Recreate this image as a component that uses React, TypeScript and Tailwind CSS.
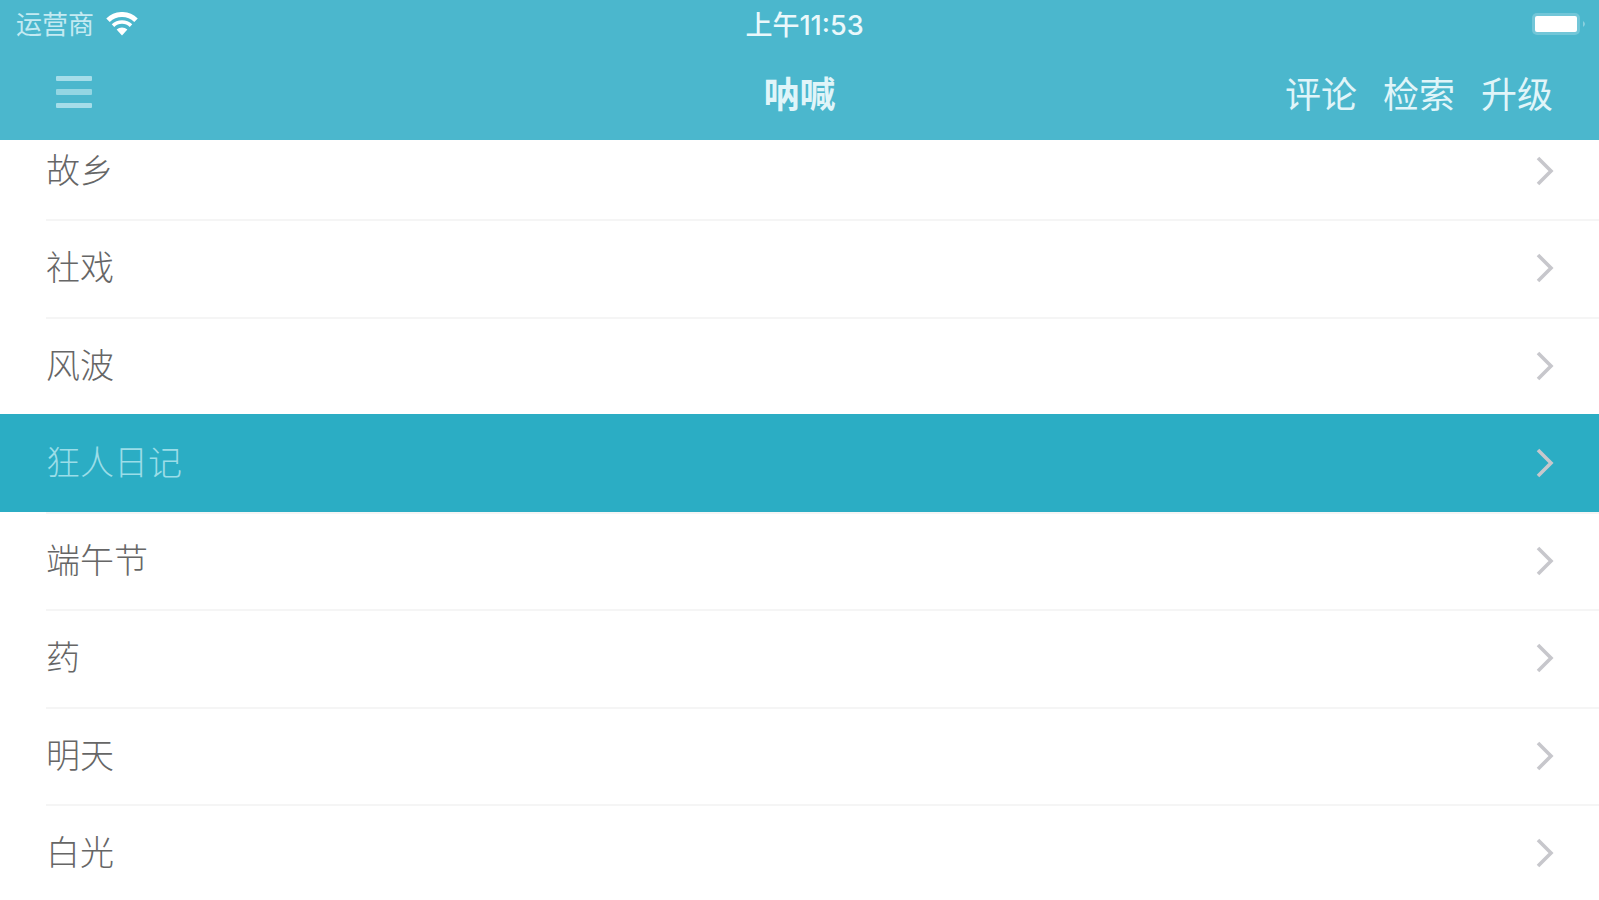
const chapters = ["故乡", "社戏", "风波", "狂人日记", "端午节", "药", "明天", "白光"];
const selectedChapter = "狂人日记";
const actions = ["评论", "检索", "升级"];

const WifiIcon = () => (
    <svg width="32" height="24" viewBox="0 0 32 24" fill="none" aria-hidden="true">
        <path d="M2 8.2a20 20 0 0 1 28 0" stroke="currentColor" strokeWidth="5" />
        <path d="M7 13.6a13 13 0 0 1 18 0" stroke="currentColor" strokeWidth="3.6" />
        <path d="M16 23.5l-5.4-6a8 8 0 0 1 10.8 0z" fill="currentColor" />
    </svg>
);

const BatteryIcon = () => (
    <svg width="56" height="24" viewBox="0 0 56 24" aria-hidden="true">
        <rect x="1" y="1" width="48" height="22" rx="5" fill="#fff" opacity="0.22" />
        <rect x="4" y="4" width="42" height="16" rx="2" fill="#fff" />
        <path d="M52 9q4 3 0 6z" fill="#fff" opacity="0.35" />
    </svg>
);

const MenuIcon = () => (
    <svg width="36" height="34" viewBox="0 0 36 34" fill="#a5dde9" aria-hidden="true">
        <rect y="1" width="36" height="5" rx="1" />
        <rect y="14" width="36" height="6" rx="1" opacity="0.8" />
        <rect y="28" width="36" height="5" rx="1" />
    </svg>
);

const ChevronIcon = () => (
    <svg width="20" height="32" viewBox="0 0 20 32" fill="none" aria-hidden="true">
        <path d="M3 3l13 13L3 29" stroke="#c7c7cc" strokeWidth="3.6" />
    </svg>
);

const StatusBar = () => (
    <div className="grid h-12 grid-cols-[1fr_auto_1fr] items-center pr-3 pl-4 text-[26px] leading-none">
        <div className="flex items-center gap-3 text-[#c4eaf2]">
            <span className="pt-0.5">运营商</span>
            <span className="text-white"><WifiIcon /></span>
        </div>
        <span className="pt-0.5 pl-1.5 text-[27px] font-medium text-[#eaf8fb]">上午11:53</span>
        <div className="flex justify-end">
            <BatteryIcon />
        </div>
    </div>
);

const NavBar = () => (
    <nav className="grid h-[92px] grid-cols-[1fr_auto_1fr] items-center px-[46px] text-4xl leading-none">
        <button type="button" aria-label="菜单" className="justify-self-start pb-1 pl-2.5">
            <MenuIcon />
        </button>
        <h1 className="pt-0.5 font-bold text-[#e0f5f9]">呐喊</h1>
        <div className="flex justify-end gap-[26px] pt-0.5 text-[#e0f5f9]">
            {actions.map((action) => (
                <button key={action} type="button">{action}</button>
            ))}
        </div>
    </nav>
);

const ChapterRow = (props: { title: string, selected: boolean }) => {
    const { title, selected } = props;
    return (
        <li className={`odd:h-[97px] even:h-[98px] ${selected ? "bg-[#2badc4]" : ""}`}>
            <a
                href="#"
                aria-current={selected ? "true" : undefined}
                className={`ml-[46px] flex h-full items-center justify-between border-t-2 pr-11 pb-0.5 ${selected ? "border-transparent text-[#9bdde8]" : "border-[#f5f5f5] text-[#666]"}`}
            >
                <span className="text-[34px] leading-none font-light">{title}</span>
                <ChevronIcon />
            </a>
        </li>
    );
};

const App = () => {
    return (
        <div className="flex h-screen flex-col overflow-hidden bg-white font-['Inter','Noto_Sans_CJK_SC',sans-serif]">
            <header className="relative z-10 shrink-0 bg-[#4bb7cd]">
                <StatusBar />
                <NavBar />
            </header>
            {/* the list is scrolled slightly under the header */}
            <main className="min-h-0 flex-1">
                <ul className="-mt-[18px]">
                    {chapters.map((title) => (
                        <ChapterRow key={title} title={title} selected={title === selectedChapter} />
                    ))}
                </ul>
            </main>
        </div>
    );
};

export default App;
